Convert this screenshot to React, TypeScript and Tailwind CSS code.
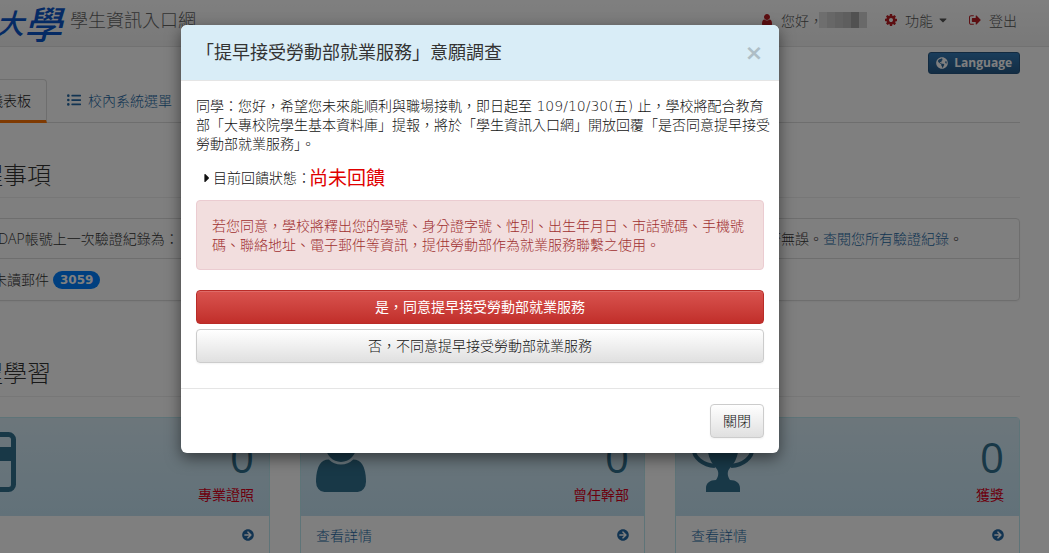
import React, { useState } from 'react';
import { FaGlobeAmericas, FaListUl, FaCaretDown, FaCaretRight, FaArrowCircleRight } from 'react-icons/fa';

interface Summary {
  id: string;
  label: string;
  count: number;
  icon: React.ReactNode;
}

const summaries: Summary[] = [
  { id: 'license', label: '專業證照', count: 0, icon: <CardIcon /> },
  { id: 'cadre', label: '曾任幹部', count: 0, icon: <PersonIcon className="w-[50px] h-[60px] mt-3.5" /> },
  { id: 'award', label: '獲獎', count: 0, icon: <TrophyIcon /> },
];

function CardIcon() {
  return (
    <svg viewBox="0 0 75 60" className="w-[75px] h-[60px] mt-3.5" fill="none" aria-hidden="true">
      <rect x="2.5" y="2.5" width="70" height="55" rx="5" stroke="currentColor" strokeWidth="5" />
      <rect x="3" y="15" width="69" height="14" fill="currentColor" />
    </svg>
  );
}

function PersonIcon({ className }: { className: string }) {
  return (
    <svg viewBox="0 0 1280 1536" className={className} fill="currentColor" aria-hidden="true">
      <path d="M1280 1271q0 109-62.500 187t-150.500 78h-854q-88 0-150.500-78t-62.500-187q0-85 8.500-160.500t31.500-152 58.500-131 94-89 134.500-34.500q131 128 313 128t313-128q76 0 134.500 34.500t94 89 58.500 131 31.500 152 8.500 160.500zM1024 384q0 159-112.500 271.500t-271.500 112.500-271.500-112.500-112.500-271.500 112.500-271.500 271.500-112.500 271.500 112.500 112.500 271.500z" />
    </svg>
  );
}

function TrophyIcon() {
  return (
    <svg viewBox="0 0 64 60" className="w-16 h-[60px] mt-3.5" aria-hidden="true">
      <path d="M15 10H2.500v6C2.500 26 12 33 24 34M49 10h12.500v6C61.500 26 52 33 40 34" fill="none" stroke="currentColor" strokeWidth="4" />
      <path d="M16 0h32v8c0 14-3 22-9 28-3 3-3 8 0 12 6 0 10 3 10 8v4H15v-4c0-5 4-8 10-8 3-4 3-9 0-12-6-6-9-14-9-28z" fill="currentColor" />
    </svg>
  );
}

function CogIcon() {
  return (
    <svg viewBox="0 128 1536 1536" className="size-3 mr-2 text-[#b91d22]" fill="currentColor" aria-hidden="true">
      <path d="M1024 896q0-106-75-181t-181-75-181 75-75 181 75 181 181 75 181-75 75-181zm512-109v222q0 12-8 23t-20 13l-185 28q-19 54-39 91 35 50 107 138 10 12 10 25t-9 23q-27 37-99 108t-94 71q-12 0-26-9l-138-108q-44 23-91 38-16 136-29 186-7 28-36 28h-222q-14 0-24.500-8.500t-11.500-21.500l-28-184q-49-16-90-37l-141 107q-10 9-25 9-14 0-25-11-126-114-165-168-7-10-7-23 0-12 8-23 15-21 51-66.500t54-70.500q-27-50-41-99l-183-27q-13-2-21-12.500t-8-23.500v-222q0-12 8-23t19-13l186-28q14-46 39-92-40-57-107-138-10-12-10-24 0-10 9-23 26-36 98.500-107.500t94.500-71.500q13 0 26 10l138 107q44-23 91-38 16-136 29-186 7-28 36-28h222q14 0 24.500 8.500t11.500 21.500l28 184q49 16 90 37l142-107q9-9 24-9 13 0 25 10 129 119 165 170 7 8 7 22 0 12-8 23-15 21-51 66.500t-54 70.500q26 50 41 98l183 28q13 2 21 12.500t8 23.500z" />
    </svg>
  );
}

function SignOutIcon() {
  return (
    <svg viewBox="0 128 1600 1536" className="size-3 mr-2 text-[#b91d22]" fill="currentColor" aria-hidden="true">
      <path d="M640 1440q0 4 1 20t.5 26.500-3 23.500-10 19.500-20.500 6.500h-320q-119 0-203.500-84.500t-84.500-203.500v-704q0-119 84.500-203.500t203.500-84.500h320q13 0 22.500 9.500t9.500 22.500q0 4 1 20t.5 26.500-3 23.500-10 19.500-20.500 6.500h-320q-66 0-113 47t-47 113v704q0 66 47 113t113 47h312l11.500 1 11.500 3 8 5.500 7 9 2 13.500zM1568 896q0 26-19 45l-544 544q-19 19-45 19t-45-19-19-45v-288h-448q-26 0-45-19t-19-45v-384q0-26 19-45t45-19h448v-288q0-26 19-45t45-19 45 19l544 544q19 19 19 45z" />
    </svg>
  );
}

function Header() {
  return (
    <header className="h-[47px] border-b border-[#e2e2e2] bg-linear-to-b from-white to-[#f2f2f2] flex items-start justify-between pr-8">
      <div className="flex items-start">
        <div className="flex w-[70px] text-[#0a55c8] font-medium italic">
          <span className="-ml-1 text-[28px] leading-[46px]">大</span>
          <span className="text-[38px] leading-[48px]">學</span>
        </div>
        <span className="text-[18px] leading-10 font-light text-[#666]">學生資訊入口網</span>
      </div>
      <nav className="flex items-center h-10 font-light text-[#555]">
        <a href="#me" className="flex items-center">
          <PersonIcon className="size-3 mr-2 text-[#b91d22]" />
          您好，
          <span className="-ml-1 grid grid-cols-6 w-12 h-4">
            <i className="bg-[#dcdcdc]" />
            <i className="bg-[#cfcfcf]" />
            <i className="bg-[#c4c4c4]" />
            <i className="bg-[#bdbdbd]" />
            <i className="bg-[#a2a2a2]" />
            <i className="bg-[#d2d2d2]" />
          </span>
        </a>
        <button type="button" className="flex items-center ml-[18px]">
          <CogIcon />
          功能
          <FaCaretDown className="size-3 ml-1" />
        </button>
        <a href="#logout" className="flex items-center ml-5">
          <SignOutIcon />
          登出
        </a>
      </nav>
    </header>
  );
}

function SummaryCard({ item }: { item: Summary }) {
  return (
    <section className="h-[160px] rounded border border-[#bce8f1]">
      <div className="h-[98px] px-[15px] flex justify-between text-[#31708f] bg-linear-to-b from-[#d9edf7] to-[#c4e3f3]">
        {item.icon}
        <div className="flex flex-col items-end">
          <span className="text-[42px] leading-[44px] mt-[17px]">{item.count}</span>
          <span className="leading-8 text-[#d9001b]">{item.label}</span>
        </div>
      </div>
      <a href={`#${item.id}`} className="h-[38px] px-[15px] flex items-center justify-between font-light text-[#2468a4]">
        查看詳情
        <FaArrowCircleRight className="size-3" />
      </a>
    </section>
  );
}

function Dashboard() {
  return (
    <main className="-ml-[75px] mr-[29px]">
      <div className="flex justify-end pt-[5px]">
        <button type="button" className="h-[22px] px-[7px] flex items-center gap-1.5 rounded-[3px] border border-[#245580] bg-linear-to-b from-[#337ab7] to-[#265a88] text-white text-[12px] font-bold">
          <FaGlobeAmericas className="size-3" />
          Language
        </button>
      </div>
      <nav className="mt-[5px] h-11 flex border-b border-[#ddd] font-light">
        <a href="#dashboard" className="w-[122px] h-11 pr-[15px] flex items-center justify-end border border-[#ddd] border-b-3 border-b-[#ff7404] rounded-t text-[#222]">儀表板</a>
        <a href="#menu" className="pl-5 h-[42px] flex items-center gap-[7px] text-[#2468a4]">
          <FaListUl className="size-3.5" />
          校內系統選單
        </a>
      </nav>
      <h2 className="mt-[34px] pl-[30px] h-[41px] text-[24px] leading-9 font-light border-b border-[#eee]">提醒事項</h2>
      <ul className="mt-5 rounded border border-[#ddd] shadow-xs font-light">
        <li className="h-10 pl-[65px] flex items-center justify-between border-b border-[#ddd]">
          <span>LDAP帳號上一次驗證紀錄為：</span>
          <span className="pr-14">是否無誤。<a href="#records" className="text-[#2468a4]">查閱您所有驗證紀錄</a>。</span>
        </li>
        <li className="h-[41px] pl-[67px] flex items-center gap-1">
          未讀郵件
          <span className="px-[7px] rounded-full bg-[#007fff] text-white font-['DejaVu_Sans'] text-[12px] leading-[18px] font-bold">3059</span>
        </li>
      </ul>
      <h2 className="mt-[52px] pl-[30px] h-[44px] text-[24px] leading-10 font-light border-b border-[#eee]">課程學習</h2>
      <div className="mt-5 grid grid-cols-3 gap-[30px]">
        {summaries.map(item => (
          <SummaryCard key={item.id} item={item} />
        ))}
      </div>
    </main>
  );
}

function SurveyModal({ onClose }: { onClose: () => void }) {
  return (
    <div className="absolute inset-0 bg-black/50 flex items-start justify-center px-4 pt-[25px]">
      <div role="dialog" aria-labelledby="survey-title" className="w-[598px] mr-[89px] rounded-md bg-white shadow-[0_5px_15px_rgba(0,0,0,0.5)] font-['DejaVu_Sans','Noto_Sans_CJK_TC',sans-serif] font-light text-[#111]">
        <div className="h-14 px-[15px] flex items-center justify-between rounded-t-md bg-[#d9edf7] border-b border-[#e5e5e5]">
          <h1 id="survey-title" className="text-[18px] font-normal text-[#333]">「提早接受勞動部就業服務」意願調查</h1>
          <button type="button" aria-label="關閉視窗" onClick={onClose} className="w-5 h-7 text-[22px] leading-6 font-bold text-[#aebec6]">×</button>
        </div>
        <div className="px-[15px] pt-4 pb-[25px] border-b border-[#e5e5e5]">
          <p className="whitespace-nowrap leading-[19px]">
            同學：您好，希望您未來能順利與職場接軌，即日起至 109/10/30(五) 止，學校將配合教育
            <br />
            部「大專校院學生基本資料庫」提報，將於「學生資訊入口網」開放回覆「是否同意提早接受
            <br />
            勞動部就業服務」。
          </p>
          <p className="mt-2.5 pl-1 flex items-center h-7">
            <FaCaretRight className="size-3.5 -mr-px" />
            目前回饋狀態：
            <strong className="-ml-0.5 text-[19px] font-normal text-[#e00000]">尚未回饋</strong>
          </p>
          <div className="mt-2 h-[70px] p-[15px] pt-4 rounded border border-[#ebccd1] bg-[#f2dede] text-[#a03030] leading-[19px]">
            若您同意，學校將釋出您的學號、身分證字號、性別、出生年月日、市話號碼、手機號碼、聯絡地址、電子郵件等資訊，提供勞動部作為就業服務聯繫之使用。
          </div>
          <button type="button" className="mt-5 h-[34px] w-full rounded border border-[#b92c28] bg-linear-to-b from-[#d9534f] to-[#c12e2a] font-normal text-white shadow-[inset_0_1px_0_rgba(255,255,255,0.15)]">是，同意提早接受勞動部就業服務</button>
          <button type="button" className="mt-[5px] h-[34px] w-full rounded border border-[#ccc] bg-linear-to-b from-white to-[#e0e0e0] shadow-xs">否，不同意提早接受勞動部就業服務</button>
        </div>
        <div className="p-[15px] flex justify-end">
          <button type="button" onClick={onClose} className="h-[34px] px-3 rounded border border-[#ccc] bg-linear-to-b from-white to-[#e0e0e0] shadow-xs">關閉</button>
        </div>
      </div>
    </div>
  );
}

export default function App() {
  const [showSurvey, setShowSurvey] = useState(true);

  return (
    <div lang="zh-Hant-TW" className="relative h-screen overflow-hidden bg-white text-[14px] text-[#333] font-['Open_Sans','Noto_Sans_CJK_TC',sans-serif]">
      <Header />
      <Dashboard />
      {showSurvey && <SurveyModal onClose={() => setShowSurvey(false)} />}
    </div>
  );
}
